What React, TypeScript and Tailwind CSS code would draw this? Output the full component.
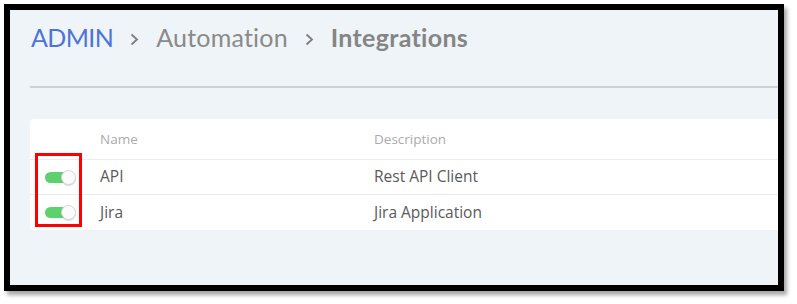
import React from 'react';

type Integration = {
  name: string;
  description: string;
  enabled: boolean;
};

const integrations: Integration[] = [
  { name: 'API', description: 'Rest API Client', enabled: true },
  { name: 'Jira', description: 'Jira Application', enabled: true },
];

const Toggle: React.FC<{ on: boolean }> = ({ on }) => (
  <div className="relative w-[31px] h-[15px] flex items-center">
    <div className={`w-[24px] h-[11px] rounded-full ${on ? 'bg-[#5dd16d]' : 'bg-[#d0d4d8]'}`}></div>
    <div className="absolute left-[16px] top-0 w-[15px] h-[15px] rounded-full bg-[#fbfbfb] border border-[#d6d6d6] shadow-[0_1px_1px_rgba(0,0,0,0.15)]"></div>
  </div>
);

const Chevron = () => (
  <svg width="9" height="13" viewBox="0 0 9 13" className="mx-[17px] mt-[3px]">
    <path d="M1.5 1.5 L7 6.5 L1.5 11.5" fill="none" stroke="#7d7d7d" strokeWidth="1.8" />
  </svg>
);

export default function App() {
  return (
    <div className="w-[797px] h-[304px] bg-white pt-[4px] pl-[4px]" style={{ fontFamily: 'Lato, "Open Sans", sans-serif' }}>
      {/* Framed screenshot */}
      <div className="w-[780px] h-[287px] border-[6px] border-black bg-[#eff4f8] overflow-hidden shadow-[3px_4px_4px_rgba(0,0,0,0.35)]">
        <div className="flex items-center h-[56px] pl-[21px]">
          <span className="text-[25px] text-[#4d73d9] tracking-[-0.6px]">ADMIN</span>
          <Chevron />
          <span className="text-[25px] text-[#8a8a8a] tracking-[0.2px]">Automation</span>
          <Chevron />
          <span className="text-[25px] font-bold text-[#858585] tracking-[0.3px]">Integrations</span>
        </div>

        <div className="ml-[20px] mt-[20px] h-[2px] bg-[#cdd1d4]"></div>

        <div
          className="relative ml-[20px] mt-[31px] w-[800px] bg-white rounded-[4px] text-[15.5px]"
          style={{ fontFamily: '"Open Sans", Lato, sans-serif' }}
        >
          <div className="grid grid-cols-[70px_274px_1fr] h-[41px] items-center border-b border-[#ececec] text-[13.5px] text-[#ababab]">
            <div></div>
            <div>Name</div>
            <div>Description</div>
          </div>
          {integrations.map((item, i) => (
            <div
              key={item.name}
              className={`grid grid-cols-[70px_274px_1fr] h-[35px] items-center text-[#5a5a5a] ${i < integrations.length - 1 ? 'border-b border-[#ececec]' : ''}`}
            >
              <div className="pl-[15px]">
                <Toggle on={item.enabled} />
              </div>
              <div>{item.name}</div>
              <div>{item.description}</div>
            </div>
          ))}

          {/* Highlight box around the toggles */}
          <div className="absolute left-[5px] top-[34px] w-[47px] h-[74px] border-[3px] border-[#ff0000]"></div>
        </div>
      </div>
    </div>
  );
}
